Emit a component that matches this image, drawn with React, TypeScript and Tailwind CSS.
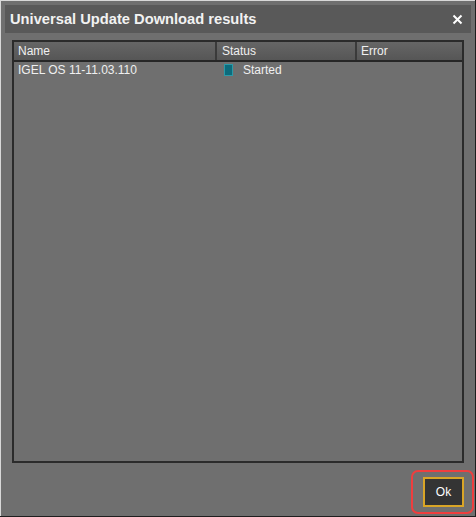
import React from "react";

export default function App() {
  return (
    <div className="w-[476px] h-[517px] bg-[#1e1e1e] font-['Liberation_Sans',Arial,sans-serif]">
      <div className="w-[475px] h-[516px] bg-[#6f6f6f] border-t border-l border-[#d8d8d8] flex flex-col p-1">
        {/* title bar */}
        <div className="h-[28px] shrink-0 bg-[#595959] flex items-center justify-between pl-[5px] pr-[8px]">
          <span className="text-[14.7px] font-bold text-[#f2f2f2]">Universal Update Download results</span>
          <svg width="11" height="11" viewBox="0 0 11 11" className="text-white">
            <path d="M1.5 1.5 L9.5 9.5 M9.5 1.5 L1.5 9.5" stroke="currentColor" strokeWidth="2" />
          </svg>
        </div>

        {/* table */}
        <div className="mt-[7px] mx-[7px] h-[423px] shrink-0 border-2 border-[#2b2b2b] flex flex-col text-[12px] text-[#f0f0f0]">
          <div className="flex h-[20px] border-b-2 border-[#262626] bg-gradient-to-b from-[#666666] to-[#565656]">
            <div className="w-[203px] border-r-2 border-[#3a3a3a] pl-[4px] flex items-center">Name</div>
            <div className="w-[140px] border-r-2 border-[#3a3a3a] pl-[5px] flex items-center">Status</div>
            <div className="flex-1 pl-[4px] flex items-center">Error</div>
          </div>
          <div className="flex h-[16px] items-center">
            <div className="w-[205px] pl-[4px]">IGEL OS 11-11.03.110</div>
            <div className="flex items-center pl-[5px]">
              <span className="w-[9px] h-[12px] bg-[#0c6b7c] border border-[#2b9aa8]" />
              <span className="ml-[10px]">Started</span>
            </div>
          </div>
        </div>

        {/* footer */}
        <div className="flex-1 min-h-0 flex justify-end items-start -mr-[3px] pt-[7px]">
          <div className="w-[63px] h-[44px] shrink-0 rounded-[7px] border-2 border-[#ef3e3e] flex items-center justify-center pl-[2px]">
            <button className="w-[41px] h-[30px] bg-[#343434] border-2 border-[#d9a526] text-[12px] text-white">Ok</button>
          </div>
        </div>
      </div>
    </div>
  );
}
